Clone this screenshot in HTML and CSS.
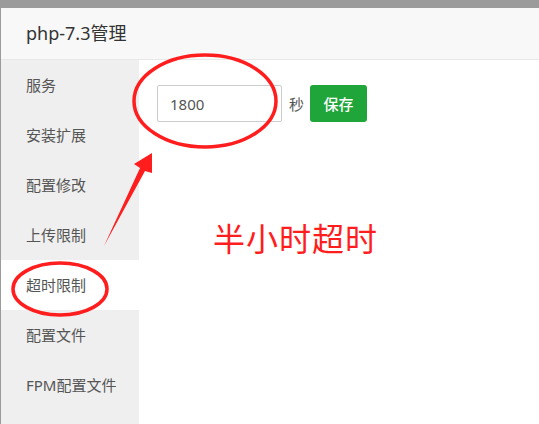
FILE: index.html
```html
<!DOCTYPE html>
<html>
<head>
<meta charset="utf-8">
<link rel="stylesheet" href="styles.css">
</head>
<body>
<div class="backdrop">
  <div class="dialog">
    <div class="dialog-header">php-7.3管理</div>
    <div class="dialog-body">
      <ul class="side-menu">
        <li class="menu-item">服务</li>
        <li class="menu-item">安装扩展</li>
        <li class="menu-item">配置修改</li>
        <li class="menu-item">上传限制</li>
        <li class="menu-item active">超时限制</li>
        <li class="menu-item">配置文件</li>
        <li class="menu-item">FPM配置文件</li>
      </ul>
      <div class="content">
        <div class="form-row">
          <input class="text-input" type="text" value="1800">
          <span class="unit">秒</span>
          <button class="btn-save">保存</button>
        </div>
      </div>
    </div>
  </div>
</div>
<svg class="annotations" width="539" height="424" viewBox="0 0 539 424">
  <ellipse cx="205" cy="101" rx="71" ry="46" fill="none" stroke="#ff1d1d" stroke-width="3.5"/>
  <ellipse cx="60" cy="289" rx="47" ry="26" fill="none" stroke="#ff1d1d" stroke-width="3.5"/>
  <polygon points="104,246 140,168 134,164 152,153 152,173 145,171" fill="#ff1d1d"/>
</svg>
<div class="note">半小时超时</div>
</body>
</html>
```
FILE: styles.css
```css
html, body {
  margin: 0;
  padding: 0;
  width: 539px;
  height: 424px;
  overflow: hidden;
  background: #9b9b9b;
  font-family: "Noto Sans", "Noto Sans CJK SC", sans-serif;
}
.backdrop {
  padding: 8px 0 0 1px;
  height: 416px;
}
.dialog {
  background: #fff;
  height: 100%;
  display: flex;
  flex-direction: column;
}
.dialog-header {
  height: 51px;
  border-bottom: 1px solid #e8e8e8;
  background: #f8f8f8;
  color: #333;
  font-size: 18px;
  line-height: 51px;
  padding-left: 25px;
  flex: none;
}
.dialog-body {
  flex: 1;
  display: flex;
}
.side-menu {
  list-style: none;
  margin: 0;
  padding: 0;
  width: 138px;
  background: #efefef;
  flex: none;
}
.menu-item {
  height: 50px;
  line-height: 50px;
  padding-left: 25px;
  font-size: 15px;
  color: #555;
}
.menu-item.active {
  background: #fff;
}
.content {
  flex: 1;
  padding: 25px 0 0 18px;
}
.form-row {
  display: flex;
  align-items: center;
}
.text-input {
  box-sizing: border-box;
  width: 125px;
  height: 37px;
  border: 1px solid #ccc;
  border-radius: 2px;
  padding: 0 12px;
  font-family: "Noto Sans", "Noto Sans CJK SC", sans-serif;
  font-size: 15px;
  color: #555;
  outline: none;
}
.unit {
  margin-left: 7px;
  font-size: 15px;
  color: #555;
}
.btn-save {
  margin-left: 6px;
  width: 57px;
  height: 37px;
  border: none;
  border-radius: 3px;
  background: #20a53a;
  color: #fff;
  font-family: "Noto Sans CJK SC", sans-serif;
  font-size: 15px;
  font-weight: 500;
  padding: 0;
}
.annotations {
  position: absolute;
  left: 0;
  top: 0;
}
.note {
  position: absolute;
  left: 213px;
  top: 213px;
  font-family: "Noto Sans CJK SC", sans-serif;
  font-size: 32px;
  line-height: 48px;
  color: #ff1d1d;
  letter-spacing: 1px;
}
```
